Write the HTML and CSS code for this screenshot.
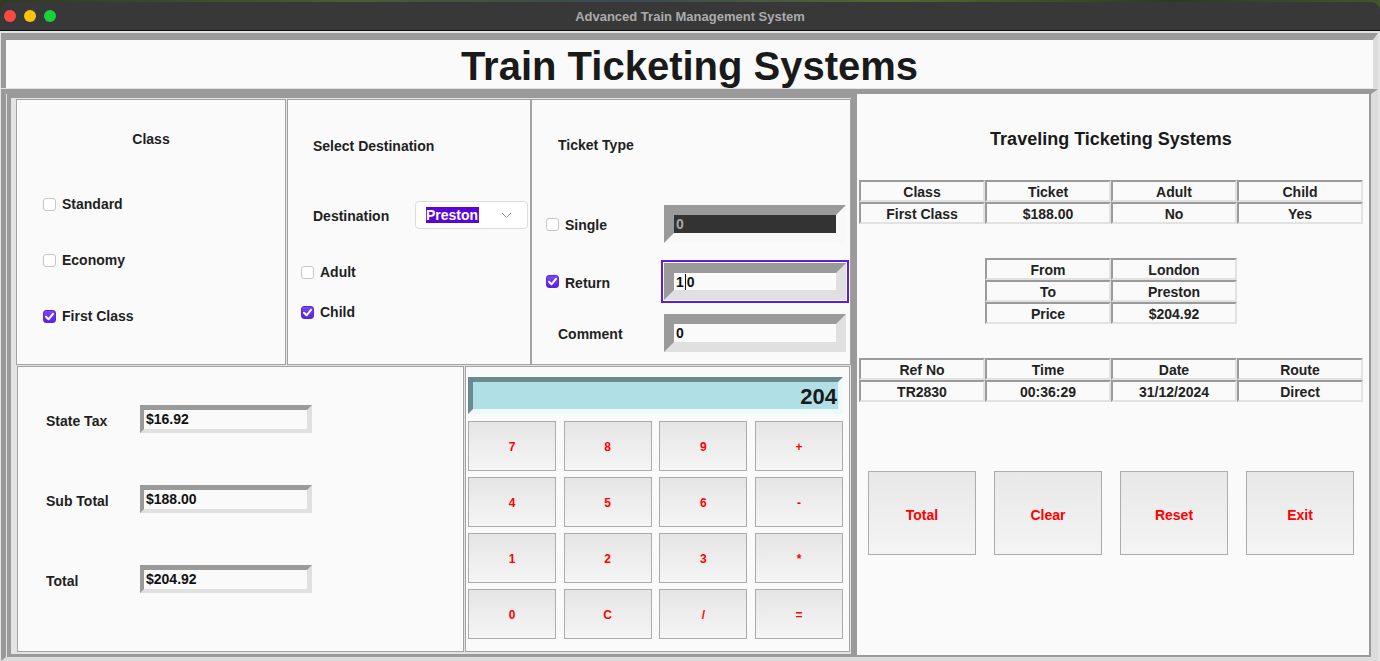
FILE: index.html
```html
<!DOCTYPE html>
<html>
<head>
<meta charset="utf-8">
<title>Advanced Train Management System</title>
<link rel="stylesheet" href="styles.css">
</head>
<body>
<div class="chrome">
  <div class="titlebar">
    <div class="lights"><span class="light red"></span><span class="light yellow"></span><span class="light green"></span></div>
    <div class="wintitle">Advanced Train Management System</div>
    <div></div>
  </div>
</div>
<div class="app">
  <header class="header"><h1>Train Ticketing Systems</h1></header>
  <div class="main">
    <div class="left">
      <div class="toprow">
        <section class="panel p-class">
          <div class="ptitle center">Class</div>
          <div class="class-opts">
            <div class="chk-row"><span class="cb"></span><span>Standard</span></div>
            <div class="chk-row"><span class="cb"></span><span>Economy</span></div>
            <div class="chk-row"><span class="cb on"><svg width="11" height="11" viewBox="0 0 11 11"><path d="M2 5.8 L4.5 8.3 L9 2.8" fill="none" stroke="#fff" stroke-width="2" stroke-linecap="round" stroke-linejoin="round"/></svg></span><span>First Class</span></div>
          </div>
        </section>
        <section class="panel p-dest">
          <div class="ptitle dest-title">Select Destination</div>
          <div class="dest-row">
            <span class="dest-label">Destination</span>
            <div class="combo"><span class="sel">Preston</span><svg class="chev" width="11" height="7" viewBox="0 0 11 7"><path d="M1 1 L5.5 5.5 L10 1" fill="none" stroke="#9a9a9a" stroke-width="1"/></svg></div>
          </div>
          <div class="chk-row adult"><span class="cb"></span><span>Adult</span></div>
          <div class="chk-row child"><span class="cb on"><svg width="11" height="11" viewBox="0 0 11 11"><path d="M2 5.8 L4.5 8.3 L9 2.8" fill="none" stroke="#fff" stroke-width="2" stroke-linecap="round" stroke-linejoin="round"/></svg></span><span>Child</span></div>
        </section>
        <section class="panel p-ticket">
          <div class="ptitle tt-title">Ticket Type</div>
          <div class="tt-row single">
            <span class="cb"></span><span class="tt-label">Single</span>
            <div class="bevel dark"><span>0</span></div>
          </div>
          <div class="tt-row ret">
            <span class="cb on"><svg width="11" height="11" viewBox="0 0 11 11"><path d="M2 5.8 L4.5 8.3 L9 2.8" fill="none" stroke="#fff" stroke-width="2" stroke-linecap="round" stroke-linejoin="round"/></svg></span><span class="tt-label">Return</span>
            <div class="bevel focus"><span>1</span><span class="caret"></span><span>0</span></div>
          </div>
          <div class="tt-row comment">
            <span class="tt-label">Comment</span>
            <div class="bevel"><span>0</span></div>
          </div>
        </section>
      </div>
      <div class="botrow">
        <section class="panel p-totals">
          <div class="tot-row"><span class="tot-label">State Tax</span><div class="tfield">$16.92</div></div>
          <div class="tot-row"><span class="tot-label">Sub Total</span><div class="tfield">$188.00</div></div>
          <div class="tot-row"><span class="tot-label">Total</span><div class="tfield">$204.92</div></div>
        </section>
        <section class="panel p-calc">
          <div class="display">204</div>
          <div class="keys">
            <button class="key">7</button><button class="key">8</button><button class="key">9</button><button class="key">+</button>
            <button class="key">4</button><button class="key">5</button><button class="key">6</button><button class="key">-</button>
            <button class="key">1</button><button class="key">2</button><button class="key">3</button><button class="key">*</button>
            <button class="key">0</button><button class="key">C</button><button class="key">/</button><button class="key">=</button>
          </div>
        </section>
      </div>
    </div>
    <div class="right">
      <div class="rcontent">
        <div class="rtitle">Traveling Ticketing Systems</div>
        <div class="grid4">
          <div class="cell">Class</div><div class="cell">Ticket</div><div class="cell">Adult</div><div class="cell">Child</div>
          <div class="cell">First Class</div><div class="cell">$188.00</div><div class="cell">No</div><div class="cell">Yes</div>
        </div>
        <div class="grid2">
          <div class="cell">From</div><div class="cell">London</div>
          <div class="cell">To</div><div class="cell">Preston</div>
          <div class="cell">Price</div><div class="cell">$204.92</div>
        </div>
        <div class="grid4 t3">
          <div class="cell">Ref No</div><div class="cell">Time</div><div class="cell">Date</div><div class="cell">Route</div>
          <div class="cell">TR2830</div><div class="cell">00:36:29</div><div class="cell">31/12/2024</div><div class="cell">Direct</div>
        </div>
        <div class="actions">
          <button class="act">Total</button>
          <button class="act">Clear</button>
          <button class="act">Reset</button>
          <button class="act">Exit</button>
        </div>
      </div>
    </div>
  </div>
</div>
</body>
</html>
```
FILE: styles.css
```css
* { box-sizing: border-box; }
html, body { margin: 0; padding: 0; }
body {
  width: 1380px;
  height: 661px;
  overflow: hidden;
  background: #e4e4e4;
  font-family: "Liberation Sans", Arial, Helvetica, sans-serif;
  font-weight: bold;
  font-size: 14px;
  color: #1f1f1f;
}

/* window chrome */
.chrome {
  height: 31px;
  padding-top: 2px;
  background: linear-gradient(90deg, #2f3a22, #4a5b31 25%, #3b4a52 45%, #55652f 65%, #2d3a1f 85%, #44552c);
}
.titlebar {
  height: 29px;
  background: #383838;
  border-radius: 9px 9px 0 0;
  border-bottom: 1px solid #0e0e0e;
  display: grid;
  grid-template-columns: 1fr auto 1fr;
  align-items: center;
}
.lights { display: flex; gap: 8px; padding-left: 4px; }
.light { width: 12px; height: 12px; border-radius: 50%; }
.red { background: #fe4a42; }
.yellow { background: #fdc10f; }
.green { background: #18d23a; }
.wintitle { font-size: 13px; color: #ababab; }

/* app */
.app {
  height: 630px;
  padding: 2px 2px 0 1px;
  overflow: hidden;
  background: #e4e4e4;
}
.header {
  height: 55px;
  border-style: solid;
  border-width: 7px 5px 0 5px;
  border-color: #9a9a9a #dcdcdc #dcdcdc #9a9a9a;
  background: #fafafa;
  display: flex;
  align-items: flex-start;
  justify-content: center;
}
.header h1 {
  margin: 0;
  padding-top: 2px;
  font-size: 40px;
  line-height: 48px;
  color: #1a1a1a;
}
.main {
  margin-top: 1px;
  display: flex;
  padding-left: 1px;
  border-style: solid;
  border-width: 5px 7px 4px 5px;
  border-color: #9a9a9a #dcdcdc #dcdcdc #9a9a9a;
  background: #e4e4e4;
}
.left {
  width: 848px;
  border-style: solid;
  border-width: 4px 4px 3px 4px;
  border-color: #9a9a9a;
  padding: 1px 0 2px 5px;
}
.toprow { display: flex; height: 266px; }
.botrow { display: flex; height: 286px; margin-top: 1px; padding-left: 1px; gap: 1px; }
.panel { border: 1px solid #a3a3a3; background: #fafafa; }
.p-class { width: 270px; margin-right: 1px; padding-top: 29px; }
.p-dest { width: 244px; padding-top: 36px; }
.p-ticket { width: 320px; padding-top: 35px; }
.p-totals { width: 447px; padding: 38px 0 0 28px; }
.p-calc { width: 385px; padding: 10px 0 0 2px; }

.ptitle { line-height: 20px; }
.center { text-align: center; }

/* checkboxes */
.chk-row { display: flex; align-items: center; gap: 6px; height: 20px; }
.cb {
  width: 13px;
  height: 13px;
  flex: none;
  border-radius: 3px;
  border: 1px solid #c6c6c6;
  background: #fff;
  display: flex;
  align-items: center;
  justify-content: center;
}
.cb.on {
  background: linear-gradient(#7b48f5, #5a22e2);
  border-color: #5a22e2;
}

.class-opts {
  margin-top: 45px;
  padding-left: 26px;
  display: flex;
  flex-direction: column;
  gap: 36px;
}

/* destination */
.dest-title { padding-left: 25px; }
.dest-row {
  display: flex;
  align-items: center;
  height: 28px;
  margin-top: 45px;
  padding-left: 25px;
}
.dest-label { width: 102px; padding-top: 2px; }
.combo {
  width: 113px;
  height: 28px;
  border: 1px solid #dcdcdc;
  border-radius: 4px;
  background: #fff;
  display: flex;
  align-items: center;
  justify-content: space-between;
  padding: 0 15px 0 10px;
}
.sel {
  background: #5a06d8;
  color: #fff;
  line-height: 16px;
  padding: 0 1px 0 0;
}
.chev { margin-top: 1px; }
.adult { margin-top: 33px; padding-left: 13px; }
.child { margin-top: 20px; padding-left: 13px; }

/* ticket type */
.tt-title { padding-left: 26px; }
.tt-row {
  display: flex;
  align-items: center;
  gap: 6px;
  padding-left: 14px;
  padding-right: 4px;
}
.tt-label { flex: 1; padding-top: 2px; }
.single { margin-top: 50px; }
.ret { margin-top: 20px; }
.comment { margin-top: 14px; padding-left: 26px; }
.bevel {
  width: 182px;
  height: 38px;
  flex: none;
  border-style: solid;
  border-width: 10px;
  border-color: #9a9a9a #e0e0e0 #e0e0e0 #9a9a9a;
  background: #fafafa;
  background-clip: padding-box;
  display: flex;
  align-items: center;
  padding-left: 2px;
  color: #111;
}
.bevel.dark {
  border-color: #9a9a9a #f8f8f8 #f8f8f8 #9a9a9a;
  background: #333;
  background-clip: padding-box;
  color: #a8a8a8;
}
.bevel.focus {
  height: 37px;
  outline: 2px solid #5b1de0;
  outline-offset: 1px;
}
.caret {
  width: 1px;
  height: 16px;
  background: #111;
  margin: 0 1px 0 1px;
}

/* totals */
.tot-row { display: flex; align-items: center; height: 28px; margin-bottom: 52px; }
.tot-label { width: 94px; padding-top: 4px; }
.tfield {
  width: 172px;
  height: 28px;
  border-style: solid;
  border-width: 5px 5px 4px 4px;
  border-color: #9a9a9a #e0e0e0 #e0e0e0 #9a9a9a;
  background: #fafafa;
  background-clip: padding-box;
  padding-left: 2px;
  line-height: 19px;
  color: #111;
}

/* calculator */
.display {
  width: 375px;
  height: 37px;
  border-style: solid;
  border-width: 5px;
  border-color: #6b8a8f #eefafa #eefafa #6b8a8f;
  background: #b0e0e6;
  background-clip: padding-box;
  text-align: right;
  font-size: 22px;
  line-height: 29px;
  padding-right: 1px;
  color: #1a1a1a;
}
.keys {
  width: 375px;
  margin-top: 7px;
  display: grid;
  grid-template-columns: repeat(4, 88px);
  grid-auto-rows: 50px;
  justify-content: space-between;
  row-gap: 6px;
}
.key, .act {
  appearance: none;
  margin: 0;
  padding: 1px 0 0 0;
  border: 1px solid #acacac;
  border-radius: 0;
  background: linear-gradient(#e5e5e5, #f5f5f5);
  color: #ff0000;
  font-family: "Liberation Sans", Arial, sans-serif;
  font-weight: bold;
  font-size: 12px;
}

/* right column */
.right {
  width: 516px;
  border-style: solid;
  border-width: 0 2px 2px 2px;
  border-color: #9a9a9a;
  background: #fafafa;
  padding-left: 2px;
}
.rcontent { width: 504px; }
.rtitle {
  padding-top: 34px;
  line-height: 22px;
  font-size: 18px;
  text-align: center;
  margin-bottom: 30px;
  color: #1a1a1a;
}
.grid4 { display: grid; grid-template-columns: repeat(4, 126px); }
.grid2 { display: grid; grid-template-columns: repeat(2, 126px); margin: 34px 0 0 126px; }
.t3 { margin-top: 34px; }
.cell {
  height: 22px;
  border-style: solid;
  border-width: 2px;
  border-color: #9a9a9a #e2e2e2 #e2e2e2 #9a9a9a;
  text-align: center;
  line-height: 20px;
  color: #222;
}
.actions {
  display: flex;
  gap: 18px;
  margin-top: 69px;
  padding-left: 9px;
}
.act {
  width: 108px;
  height: 84px;
  padding-top: 3px;
  font-size: 14px;
  background: linear-gradient(#e8e8e8, #f4f4f4);
}
```
